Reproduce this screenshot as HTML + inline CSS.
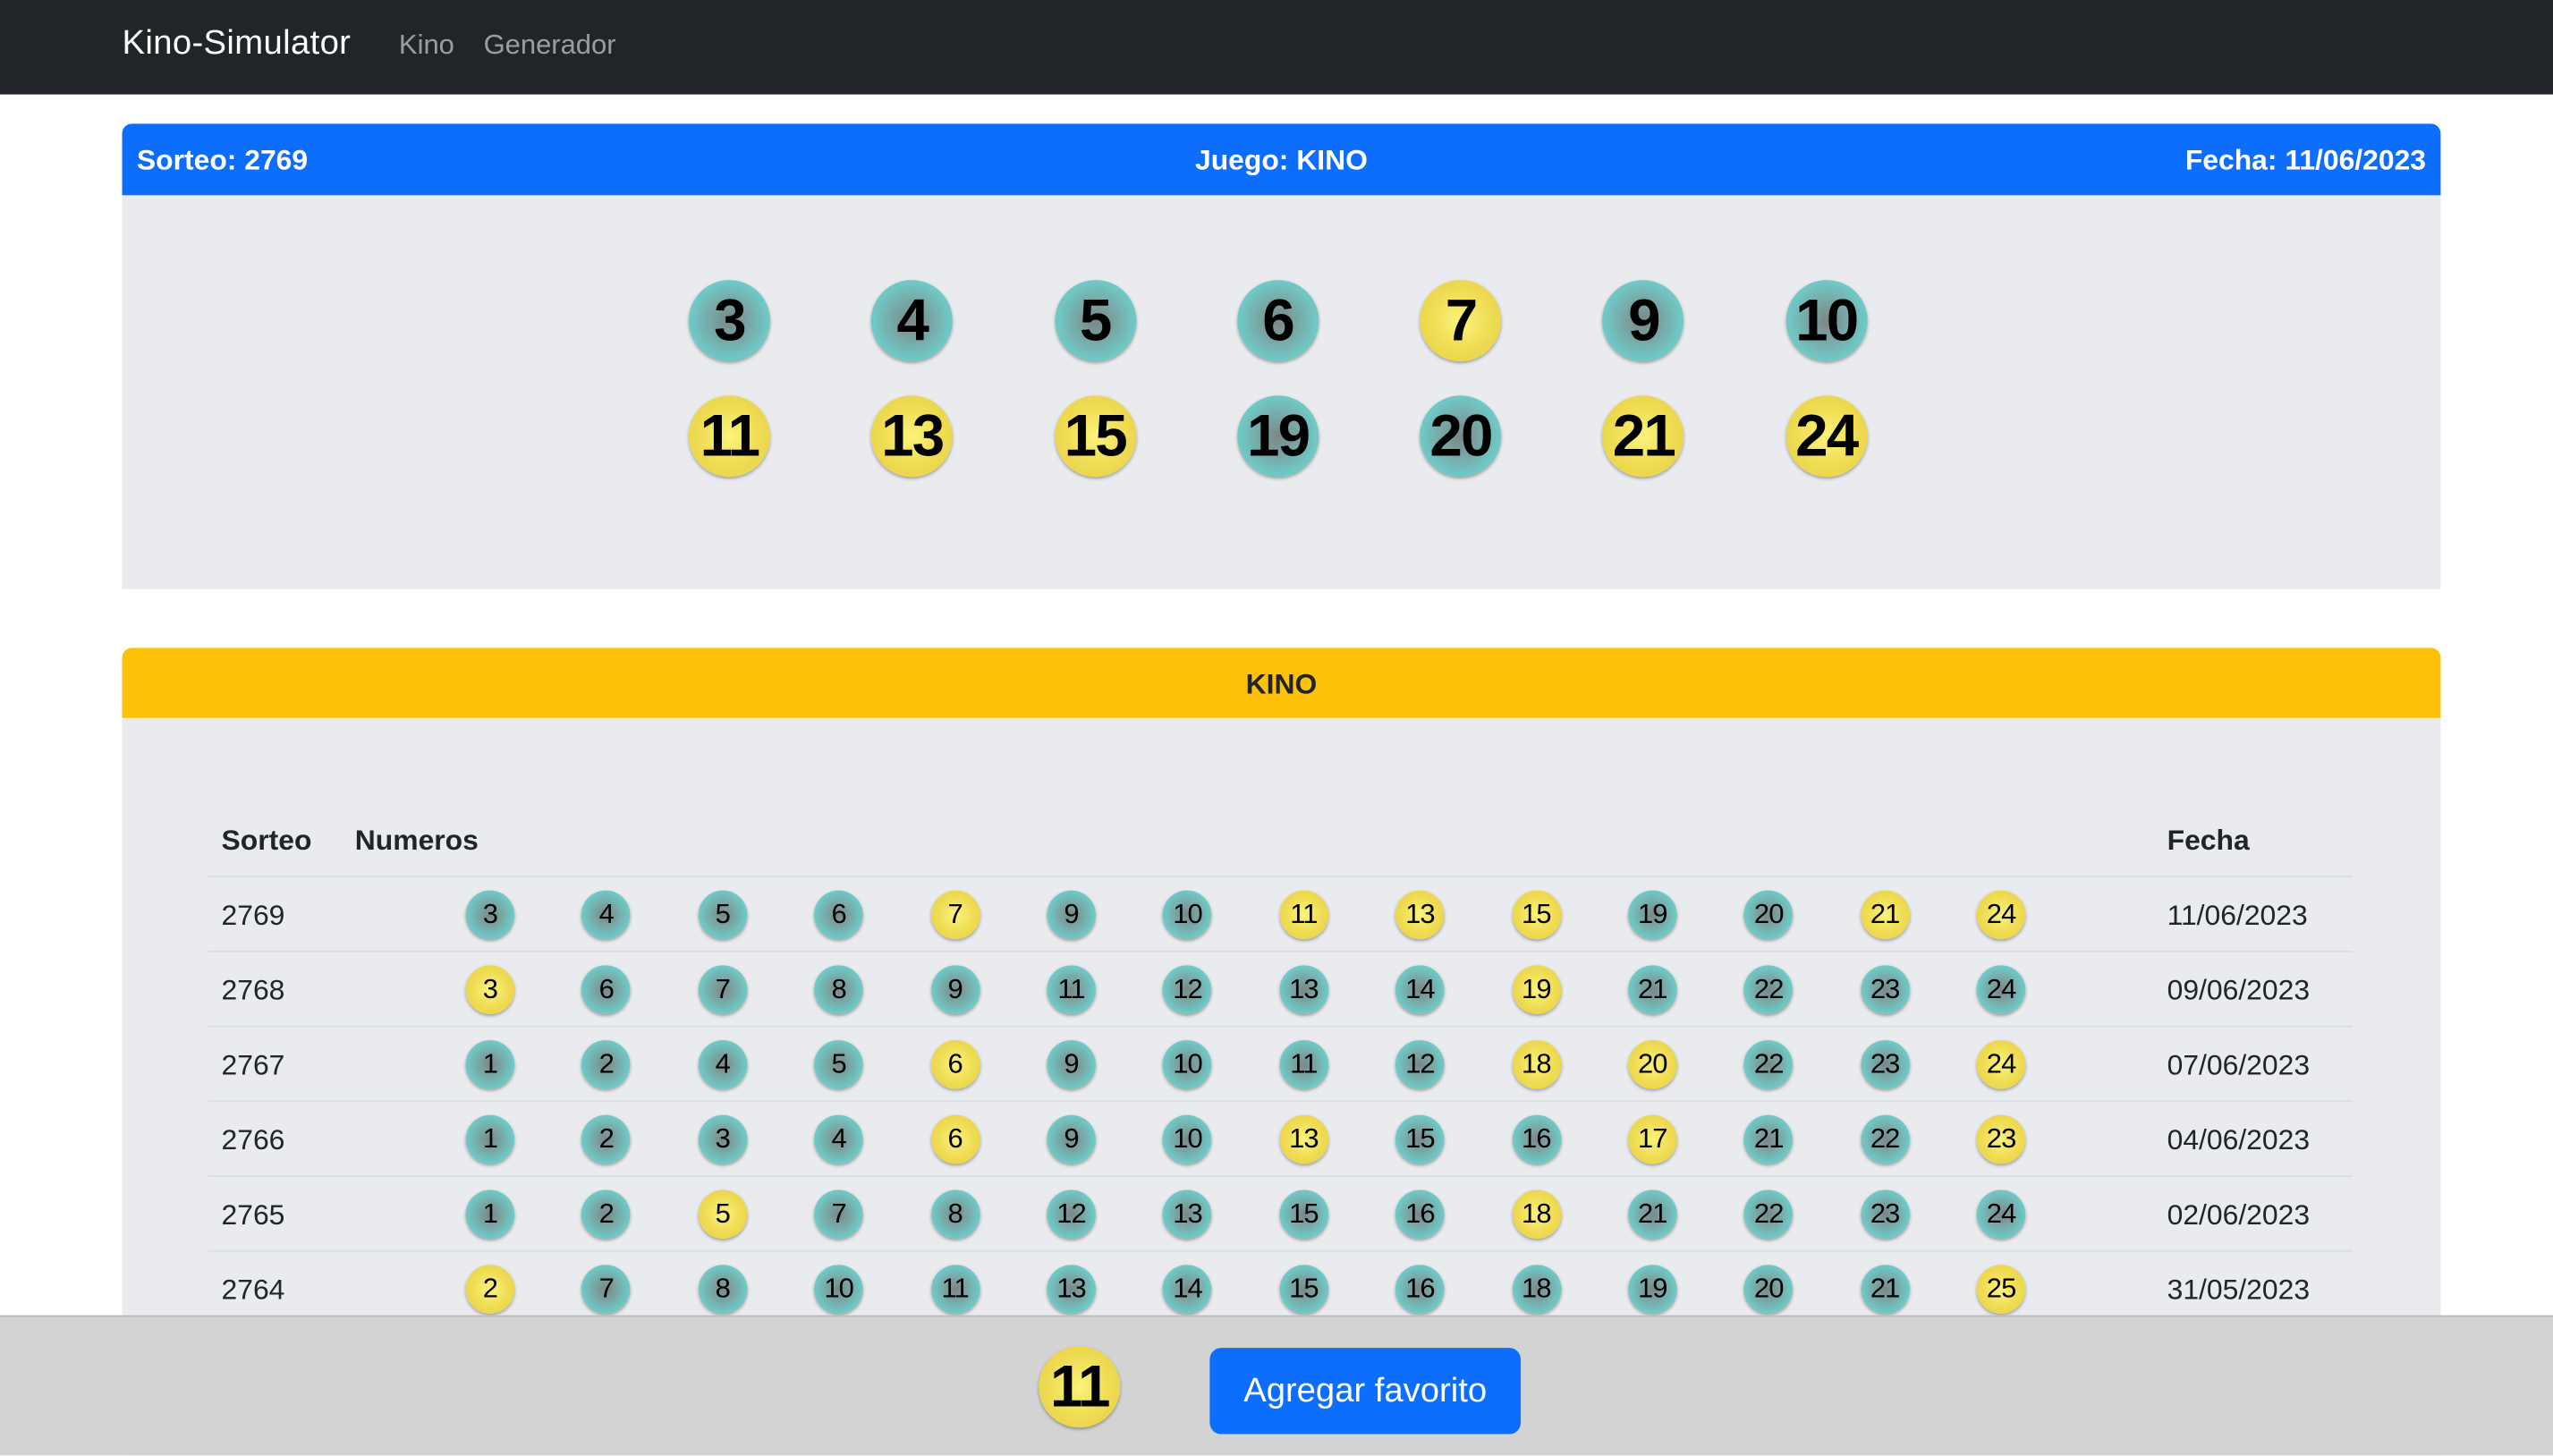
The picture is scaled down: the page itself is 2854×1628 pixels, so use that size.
<!DOCTYPE html>
<html><head><meta charset="utf-8"><style>
*{box-sizing:border-box;margin:0;padding:0}
html,body{width:2854px;height:1628px;overflow:hidden;background:#fff}
#w{position:absolute;left:0;top:0;width:1568px;height:894px;transform:scale(1.82015);transform-origin:0 0;font-family:"Liberation Sans",Arial,sans-serif;color:#212529}
.nav{position:absolute;left:0;top:0;width:1568px;height:58px;background:#212529}
.brand{position:absolute;left:75px;top:15px;font-size:21px;color:#fff;letter-spacing:0.2px}
.lk{position:absolute;top:18px;font-size:17px;color:rgba(255,255,255,.55)}
.hb{position:absolute;left:75px;width:1424px;height:44px;border-radius:6px 6px 0 0;font-weight:bold;font-size:17.5px}
.blue{top:76px;background:#0d6efd;color:#fff}
.hb span{position:absolute;top:12px}
.gbody{position:absolute;left:75px;width:1424px;background:#e9ebef}
.ball{border-radius:50%;display:flex;align-items:center;justify-content:center;color:#000;box-shadow:0 1px 2px rgba(0,0,0,.35)}
.t{background:radial-gradient(circle,#7b8787 0%,#78a3a2 30%,#70c6c3 65%,#6cd7d3 100%)}
.y{background:radial-gradient(circle,#fbf37c 0%,#f0dd55 50%,#e5cd40 100%)}
.big{width:50px;height:50px;font-size:36px;font-weight:bold;letter-spacing:-1px}
.trow{position:absolute;left:423px;display:flex;gap:62.3px}
.sm{width:30px;height:30px;font-size:17px;letter-spacing:-0.5px}
.row{position:absolute;left:128px;width:1317px;height:46px;border-top:1px solid #dadde1;font-size:17.5px}
.row .s{position:absolute;left:8px;top:13px}
.row .f{position:absolute;left:1203px;top:13px}
.row .bs{position:absolute;left:158px;top:8px;display:flex;gap:41.4px}
.th{position:absolute;top:506px;font-weight:bold;font-size:17.5px}
.bottom{position:absolute;left:0;top:808px;width:1568px;height:86px;background:#d3d3d3;border-top:1px solid #bbb}
.btn{position:absolute;left:743px;top:19px;width:191px;height:53px;background:#0d6efd;border-radius:7px;color:#fff;font-size:21px;display:flex;align-items:center;justify-content:center}
</style></head><body><div id="w">
<div class="nav"><div class="brand">Kino-Simulator</div><div class="lk" style="left:245px">Kino</div><div class="lk" style="left:297px">Generador</div></div>
<div class="hb blue"><span style="left:9px">Sorteo: 2769</span><span style="left:0;width:1424px;text-align:center">Juego: KINO</span><span style="right:9px">Fecha: 11/06/2023</span></div>
<div class="gbody" style="top:120px;height:242px"></div>
<div class="trow" style="top:172px"><div class="ball big t">3</div><div class="ball big t">4</div><div class="ball big t">5</div><div class="ball big t">6</div><div class="ball big y">7</div><div class="ball big t">9</div><div class="ball big t">10</div></div>
<div class="trow" style="top:243px"><div class="ball big y">11</div><div class="ball big y">13</div><div class="ball big y">15</div><div class="ball big t">19</div><div class="ball big t">20</div><div class="ball big y">21</div><div class="ball big y">24</div></div>

<div class="hb" style="top:398px;background:#ffc107;color:#212529"><span style="left:0;width:1424px;text-align:center">KINO</span></div>
<div class="gbody" style="top:441px;height:453px"></div>
<div class="th" style="left:136px">Sorteo</div><div class="th" style="left:218px">Numeros</div><div class="th" style="left:1331px">Fecha</div>

<div class="row" style="top:538px"><div class="s">2769</div><div class="bs"><div class="ball sm t">3</div><div class="ball sm t">4</div><div class="ball sm t">5</div><div class="ball sm t">6</div><div class="ball sm y">7</div><div class="ball sm t">9</div><div class="ball sm t">10</div><div class="ball sm y">11</div><div class="ball sm y">13</div><div class="ball sm y">15</div><div class="ball sm t">19</div><div class="ball sm t">20</div><div class="ball sm y">21</div><div class="ball sm y">24</div></div><div class="f">11/06/2023</div></div>
<div class="row" style="top:584px"><div class="s">2768</div><div class="bs"><div class="ball sm y">3</div><div class="ball sm t">6</div><div class="ball sm t">7</div><div class="ball sm t">8</div><div class="ball sm t">9</div><div class="ball sm t">11</div><div class="ball sm t">12</div><div class="ball sm t">13</div><div class="ball sm t">14</div><div class="ball sm y">19</div><div class="ball sm t">21</div><div class="ball sm t">22</div><div class="ball sm t">23</div><div class="ball sm t">24</div></div><div class="f">09/06/2023</div></div>
<div class="row" style="top:630px"><div class="s">2767</div><div class="bs"><div class="ball sm t">1</div><div class="ball sm t">2</div><div class="ball sm t">4</div><div class="ball sm t">5</div><div class="ball sm y">6</div><div class="ball sm t">9</div><div class="ball sm t">10</div><div class="ball sm t">11</div><div class="ball sm t">12</div><div class="ball sm y">18</div><div class="ball sm y">20</div><div class="ball sm t">22</div><div class="ball sm t">23</div><div class="ball sm y">24</div></div><div class="f">07/06/2023</div></div>
<div class="row" style="top:676px"><div class="s">2766</div><div class="bs"><div class="ball sm t">1</div><div class="ball sm t">2</div><div class="ball sm t">3</div><div class="ball sm t">4</div><div class="ball sm y">6</div><div class="ball sm t">9</div><div class="ball sm t">10</div><div class="ball sm y">13</div><div class="ball sm t">15</div><div class="ball sm t">16</div><div class="ball sm y">17</div><div class="ball sm t">21</div><div class="ball sm t">22</div><div class="ball sm y">23</div></div><div class="f">04/06/2023</div></div>
<div class="row" style="top:722px"><div class="s">2765</div><div class="bs"><div class="ball sm t">1</div><div class="ball sm t">2</div><div class="ball sm y">5</div><div class="ball sm t">7</div><div class="ball sm t">8</div><div class="ball sm t">12</div><div class="ball sm t">13</div><div class="ball sm t">15</div><div class="ball sm t">16</div><div class="ball sm y">18</div><div class="ball sm t">21</div><div class="ball sm t">22</div><div class="ball sm t">23</div><div class="ball sm t">24</div></div><div class="f">02/06/2023</div></div>
<div class="row" style="top:768px"><div class="s">2764</div><div class="bs"><div class="ball sm y">2</div><div class="ball sm t">7</div><div class="ball sm t">8</div><div class="ball sm t">10</div><div class="ball sm t">11</div><div class="ball sm t">13</div><div class="ball sm t">14</div><div class="ball sm t">15</div><div class="ball sm t">16</div><div class="ball sm t">18</div><div class="ball sm t">19</div><div class="ball sm t">20</div><div class="ball sm t">21</div><div class="ball sm y">25</div></div><div class="f">31/05/2023</div></div>

<div class="bottom"><div class="ball big y" style="position:absolute;left:638px;top:18px">11</div><div class="btn">Agregar favorito</div></div>
</div></body></html>
